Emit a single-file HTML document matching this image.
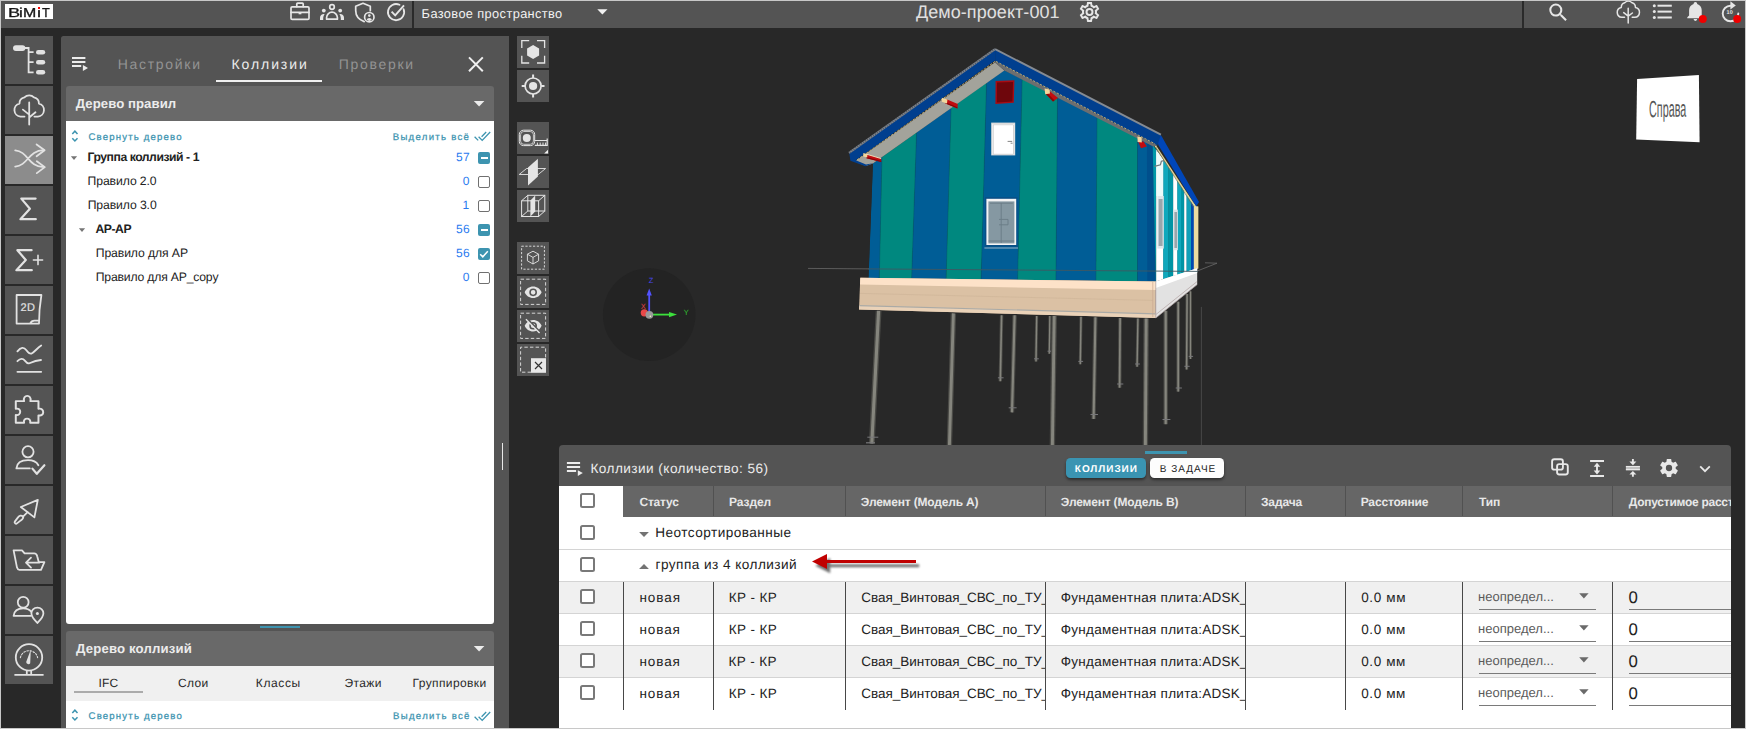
<!DOCTYPE html>
<html lang="ru">
<head>
<meta charset="utf-8">
<title>BIMIT</title>
<style>
*{box-sizing:border-box;margin:0;padding:0}
html,body{width:1746px;height:729px;overflow:hidden;background:#282828}
body{font-family:"Liberation Sans",sans-serif;text-rendering:geometricPrecision;color:#222;position:relative}
#app{position:absolute;left:0;top:0;width:1746px;height:729px;overflow:hidden;background:#282828}
.abs{position:absolute}
.t{position:absolute;white-space:nowrap;line-height:1}
svg{position:absolute;overflow:visible}
/* frame */
#frame{position:absolute;left:0;top:0;width:1746px;height:729px;border:1px solid #c8c8c8;z-index:50;pointer-events:none}
/* top bar */
#topbar{position:absolute;left:1px;top:1px;width:1744px;height:27px;background:#545454}
.vsep{position:absolute;top:1px;height:27px;width:2px;background:#2a2a2a}
/* sidebar */
.sb{position:absolute;left:5px;width:48px;height:48px;background:#545454}
.sb.on{background:#8c8c8c}
/* left panel */
#lp{position:absolute;left:61px;top:36px;width:448px;height:693px;background:#545454;border-radius:2.500px 0 0 0}
.cardh{position:absolute;left:66px;width:428px;height:35px;background:#696969;border-radius:3px 3px 0 0}
/* viewer toolbar */
.vb{position:absolute;left:517px;width:32px;height:32px;background:#545454}
/* bottom panel */
#bp{position:absolute;left:559px;top:445px;width:1172px;height:284px;background:#545454;border-radius:4px 4px 0 0;overflow:hidden}

.tw{font-size:12px;color:#222;line-height:12px}
.tw.b{font-weight:700}
.tn{font-size:12px;color:#2a7aef;line-height:12px}
.cb{position:absolute;left:478px;width:12px;height:12px;border:1.500px solid #707070;border-radius:2px;background:#fff}
.cb.f{background:#3d94b0;border:none}
.cb .mi{position:absolute;left:2.500px;top:5px;width:7px;height:2px;background:#fff}
.tab2{top:676.500px;font-size:12px;color:#2a2a2a}

.pill{border-radius:4.500px;box-shadow:0 2px 3px rgba(0,0,0,.45)}
.th{top:495.500px;font-size:12px;font-weight:700;color:#e8e8e8}
.td{font-size:14px;color:#222;line-height:16px}
.cb2{position:absolute;left:580px;width:14.500px;height:14.500px;border:2px solid #797979;border-radius:2.500px;background:#fff}
.clip{height:32px;overflow:hidden}
#tr_a,#tr_b,#tr_c,#tr_d{-webkit-text-stroke:0.250px #3d94b0}
.lg{top:5.500px;font-size:13px;color:#161616;transform-origin:0 0;-webkit-text-stroke:0.300px #161616}
</style>
</head>
<body>
<div id="app">
<div id="topbar"></div>
<div class="abs" style="left:5px;top:4px;width:48px;height:15px;background:#fff"></div>
<span id="logo"><span class="t lg" style="left:7.56px;transform:scaleX(1.396)">B</span><span class="t lg" style="left:19.49px;transform:scaleX(1.308)">i</span><span class="t lg" style="left:23.48px;transform:scaleX(1.224)">M</span><span class="t lg" style="left:36.92px;transform:scaleX(1.385)">i</span><span class="t lg" style="left:42.09px;transform:scaleX(0.982)">T</span></span>
<div class="abs" style="left:37.800px;top:7px;width:2.300px;height:2.200px;background:#ff0000;z-index:2"></div>
<div class="vsep" style="left:412px"></div>
<div class="vsep" style="left:1522px"></div>
<svg style="left:0;top:0" width="1746" height="29" viewBox="0 0 1746 29" fill="none" stroke="#e6e6e6" stroke-width="1.7" stroke-linejoin="round" stroke-linecap="round">
 <!-- briefcase -->
 <rect x="291" y="6.8" width="18" height="12.6" rx="1.2"/>
 <path d="M296.8 6.6V3.9a.8.8 0 0 1 .8-.8h4.8a.8.8 0 0 1 .8.8V6.6M291 12.4h18"/>
 <rect x="298.6" y="12" width="2.8" height="2.3" fill="#e6e6e6" stroke="none"/>
 <!-- people -->
 <circle cx="332" cy="7" r="2.3"/>
 <path d="M326.6 19.2v-1.6a5.4 5.4 0 0 1 10.8 0v1.6z"/>
 <g fill="#e6e6e6" stroke="none"><circle cx="323.8" cy="10.6" r="1.9"/><circle cx="340.2" cy="10.6" r="1.9"/>
 <path d="M320 19.9v-2.2a3.8 3.8 0 0 1 4.6-3.7a7 7 0 0 0-1.4 4v1.9z"/><path d="M344 19.9v-2.2a3.8 3.8 0 0 0-4.6-3.7a7 7 0 0 1 1.4 4v1.9z"/></g>
 <!-- shield user -->
 <path d="M364.200 21.600c-5.400-1.800-8.500-5.800-8.500-11V6.300L363 3.300l7.300 3v4.400"/>
 <circle cx="369.3" cy="17.2" r="4.7" fill="#545454"/>
 <g fill="#e6e6e6" stroke="none"><circle cx="369.3" cy="15.6" r="1.3"/><path d="M366.7 19.6a2.7 2.2 0 0 1 5.2 0a3.6 3.6 0 0 1-5.2 0z"/></g>
 <!-- check circle -->
 <path d="M403.6 9.2A8.1 8.1 0 1 1 399.5 4.8" stroke-width="1.8"/>
 <path d="M391.6 11.6l3.6 3.7l8.8-10" stroke-width="1.9" stroke-linejoin="miter" stroke-linecap="butt"/>
 <!-- dropdown triangle -->
 <path d="M597.3 9.3h10.2l-5.1 5.2z" fill="#f2f2f2" stroke="none"/>
 <!-- gear outline -->
 <g transform="translate(1077.500,0) scale(1)" fill="#e6e6e6" stroke="none"><path d="M12,8A4,4 0 0,1 16,12A4,4 0 0,1 12,16A4,4 0 0,1 8,12A4,4 0 0,1 12,8M12,10A2,2 0 0,0 10,12A2,2 0 0,0 12,14A2,2 0 0,0 14,12A2,2 0 0,0 12,10M10,22C9.75,22 9.54,21.82 9.5,21.58L9.13,18.93C8.5,18.68 7.96,18.34 7.44,17.94L4.95,18.95C4.73,19.03 4.46,18.95 4.34,18.73L2.34,15.27C2.21,15.05 2.27,14.78 2.46,14.63L4.57,12.97L4.5,12L4.57,11L2.46,9.37C2.27,9.22 2.21,8.95 2.34,8.73L4.34,5.27C4.46,5.05 4.73,4.96 4.95,5.05L7.44,6.05C7.96,5.66 8.5,5.32 9.13,5.07L9.5,2.42C9.54,2.18 9.75,2 10,2H14C14.25,2 14.46,2.18 14.5,2.42L14.87,5.07C15.5,5.32 16.04,5.66 16.56,6.05L19.05,5.05C19.27,4.96 19.54,5.05 19.66,5.27L21.66,8.73C21.79,8.95 21.73,9.22 21.54,9.37L19.43,11L19.5,12L19.43,13L21.54,14.63C21.73,14.78 21.79,15.05 21.66,15.27L19.66,18.73C19.54,18.95 19.27,19.04 19.05,18.95L16.56,17.95C16.04,18.34 15.5,18.68 14.87,18.93L14.5,21.58C14.46,21.82 14.25,22 14,22H10M11.25,4L10.88,6.61C9.68,6.86 8.62,7.5 7.85,8.39L5.44,7.35L4.69,8.65L6.8,10.2C6.4,11.37 6.4,12.64 6.8,13.8L4.68,15.36L5.43,16.66L7.86,15.62C8.63,16.5 9.68,17.14 10.87,17.38L11.24,20H12.76L13.13,17.39C14.32,17.14 15.37,16.5 16.14,15.62L18.57,16.66L19.32,15.36L17.2,13.81C17.6,12.64 17.6,11.37 17.2,10.2L19.31,8.65L18.56,7.35L16.15,8.39C15.38,7.5 14.32,6.86 13.12,6.62L12.75,4H11.25Z"/></g>
 <!-- search -->
 <g transform="translate(1546.3,0.6) scale(1.0)" fill="#e6e6e6" stroke="none"><path d="M9.5,3A6.5,6.5 0 0,1 16,9.5C16,11.11 15.41,12.59 14.44,13.73L14.71,14H15.5L20.5,19L19,20.5L14,15.5V14.71L13.73,14.44C12.59,15.41 11.11,16 9.5,16A6.5,6.5 0 0,1 3,9.5A6.5,6.5 0 0,1 9.5,3M9.5,5C7,5 5,7 5,9.5C5,12 7,14 9.5,14C12,14 14,12 14,9.5C14,7 12,5 9.5,5Z"/></g>
 <!-- cloud tree -->
 <g stroke-width="1.5"><path d="M1624.5 17.3h-2.6a5 5 0 0 1 -0.6 -9.9a4.6 4.6 0 0 1 3.4 -4.6a5.3 5.3 0 0 1 7.3 0a4.6 4.6 0 0 1 3.4 4.6a5 5 0 0 1 -0.6 9.9h-2.6"/><path d="M1628.2 23V8.2M1628.2 16.2l-4.5-3.6M1628.2 16.2l4.2-3.2"/></g>
 <!-- list -->
 <g fill="#e6e6e6" stroke="none"><rect x="1657.5" y="4.7" width="14.3" height="2"/><rect x="1657.5" y="10.6" width="14.3" height="2"/><rect x="1657.5" y="16.5" width="14.3" height="2"/><circle cx="1654.3" cy="5.7" r="1.5"/><circle cx="1654.3" cy="11.6" r="1.5"/><circle cx="1654.3" cy="17.5" r="1.5"/></g>
 <!-- bell -->
 <g transform="translate(1684.6,0.2) scale(0.9)" fill="#e6e6e6" stroke="none"><path d="M21,19V20H3V19L5,17V11C5,7.9 7.03,5.17 10,4.29C10,4.19 10,4.1 10,4A2,2 0 0,1 12,2A2,2 0 0,1 14,4C14,4.1 14,4.19 14,4.29C16.97,5.17 19,7.9 19,11V17L21,19M14,21A2,2 0 0,1 12,23A2,2 0 0,1 10,21"/></g>
 <circle cx="1702.8" cy="19" r="4" fill="#ee0000" stroke="none"/>
 <!-- replay 10 -->
 <path d="M1730.500 5.700A7.800 7.800 0 1 0 1738.300 13.500" stroke-width="1.900"/>
 <path d="M1730.400 1.200l5.400 4.400l-5.400 4z" fill="#e6e6e6" stroke="none"/>
 <circle cx="1737.2" cy="19" r="4" fill="#ee0000" stroke="none"/>
</svg>
<span class="t" style="left:1726.600px;top:11px;font-size:5.500px;color:#e6e6e6;font-weight:700">10</span>
<span class="t" id="tb_space" style="left:421.61px;top:8.00px;font-size:12.80px;color:#f2f2f2;line-height:1;letter-spacing:0.38px">Базовое пространство</span>
<span class="t" id="tb_proj" style="left:915.99px;top:3.00px;font-size:18.00px;color:#e0e0e0;line-height:1;letter-spacing:0.06px">Демо-проект-001</span>

<div class="sb" style="top:36px"></div><div class="sb" style="top:86px"></div><div class="sb on" style="top:136px"></div>
<div class="sb" style="top:186px"></div><div class="sb" style="top:236px"></div><div class="sb" style="top:286px"></div>
<div class="sb" style="top:336px"></div><div class="sb" style="top:386px"></div><div class="sb" style="top:436px"></div>
<div class="sb" style="top:486px"></div><div class="sb" style="top:536px"></div><div class="sb" style="top:586px"></div>
<div class="sb" style="top:636px"></div>
<svg style="left:0;top:0" width="60" height="729" viewBox="0 0 60 729" fill="none" stroke="#e2e2e2" stroke-width="1.8" stroke-linecap="round" stroke-linejoin="round">
 <!-- 1 tree -->
 <rect x="13" y="45.2" width="12.4" height="5.8" rx="2.9" fill="#e2e2e2" stroke="none"/>
 <path d="M24 48h4.6V72.3h5M28.6 52.2h5M28.6 62.2h5" stroke-linecap="butt" stroke-linejoin="miter"/>
 <g fill="#e2e2e2" stroke="none"><rect x="36" y="49.9" width="9.2" height="4.6" rx="2.3"/><rect x="36" y="59.9" width="9.2" height="4.6" rx="2.3"/><rect x="36" y="69.9" width="9.2" height="4.6" rx="2.3"/></g>
 <!-- 2 cloud tree -->
 <path d="M24.5 116.6h-4a6.6 6.6 0 0 1 -1 -13a6.2 6.2 0 0 1 4.9 -6.2a6.8 6.8 0 0 1 9.6 0a6.2 6.2 0 0 1 4.9 6.2a6.6 6.6 0 0 1 -1 13h-3.5"/>
 <path d="M29.2 124.5V102.5M29.2 114.6l-6.3-5M29.2 117.5l6.3-5.2"/>
 <!-- 3 shuffle -->
 <path d="M15.2 166.6c13 -1 13 -16.4 28.4 -16.4M15.2 150.4c13 1 13 16.6 28.4 16.6"/>
 <path d="M36.6 144.4l8 5.8l-8 6M36.8 161.2l8 5.9l-8 6"/>
 <!-- 4 sigma -->
 <path d="M35.6 198.6H21.3l8.6 10.2l-9.5 10.4h15.4" stroke-width="2.2"/>
 <!-- 5 sigma plus -->
 <path d="M31.6 250.2H17.4l8.4 9.8l-9.4 10.2h15.4" stroke-width="2.2"/>
 <path d="M38 255.4v9.2M33.4 260h9.2" stroke-width="1.6"/>
 <!-- 6 2D -->
 <path d="M16.6 295h24.8c-1.5 9 -2.4 18 -2.4 28.6H16.6zM39 320.6h-4.6c-2 0 -3.6 1.4 -4.4 3"/>
 <!-- 7 chart -->
 <path d="M17.4 351.4c3.5 -4.4 6.5 -4.6 9 -1.2c1.6 2.2 3.2 4 5 3.4c2.6 -1 5.6 -5.4 9.8 -8.2M17.4 361.2c3 -3 5.4 -3.2 7.4 -0.6c1.4 1.8 2.8 3.2 4.6 2.6c3.4 -1.6 7 -3 11.6 -3.2M17.4 371.8h23.8"/>
 <!-- 8 puzzle -->
 <g transform="translate(30.400,409.200) scale(1.090,1.060) translate(-30.400,-409.200)"><path d="M24.6 401.6h-7.6v7.2c5.4 -1.4 5.4 7.2 0 5.8v7.4h7.6c-1.4 -5.2 6.8 -5.2 5.6 0h7.6v-7c5.8 1.6 5.8 -7.6 0 -6.2v-7.2h-7.4c1.8 -6.6 -7.6 -6.6 -5.8 0z"/></g>
 <!-- 9 user check -->
 <circle cx="28" cy="451.8" r="5.6"/>
 <path d="M16.4 468.4c0.5 -5.6 5 -8.2 11.6 -8.2c5 0 8.6 1.8 10.4 5M16.4 468.4h13.4"/>
 <path d="M32.4 468.6l4.4 5.2l7.6 -8.6" stroke-width="2.2"/>
 <!-- 10 trowel -->
 <path d="M37.8 499.8l-17 7.2l13.6 10.4z"/>
 <path d="M27.6 512.2l-4.8 4.6"/>
 <path d="M23 516.6c-1.6 -1.8 -3.6 -1.2 -5.2 1l-3 4c-0.8 1.2 1 2.8 2.2 1.8l3.8 -3c2 -1.4 3 -2.8 2.2 -3.8z"/>
 <!-- 11 folder arrow -->
 <path d="M13.6 550.4h8.4l2.6 3h9.6c2 0 2.6 1 3 2.8l1.6 6h5.6l-3.4 7.6H19.4c-1.4 0 -2 -0.8 -2.4 -2.2z"/>
 <path d="M39.4 562.6h-13M31 557.6l-5 5l5 5"/>
 <!-- 12 user location -->
 <circle cx="23.2" cy="602.2" r="5.4"/>
 <path d="M13.6 615.8c0.6 -5 4.4 -7.4 9.6 -7.4c3.6 0 6.4 1.2 8 3.4M13.6 615.8h17.4"/>
 <path d="M37.4 607.6c-3.6 0 -6 2.6 -6 5.6c0 3.8 3.4 7 6 9.8c2.6 -2.8 6 -6 6 -9.8c0 -3 -2.4 -5.600 -6 -5.600z" fill="#545454"/>
 <circle cx="37.400" cy="613.4" r="1.500" fill="#e2e2e2" stroke="none"/>
 <!-- 13 gauge -->
 <circle cx="29" cy="657.400" r="13.200"/>
 <path d="M14.400 674.800h29.200M26.800 670.800v3.600M31.200 670.800v3.600" stroke-linecap="butt"/>
 <path d="M20.400 657.600a8.800 8.800 0 0 1 17.200 0" stroke-width="1.100" stroke-dasharray="1.6 1.600"/>
 <path d="M30.800 649.400l-4.600 12.600a2.200 2.200 0 0 0 4 1.200z" fill="#e2e2e2" stroke="none"/>
</svg>
<span class="t" style="left:20.400px;top:303px;font-size:11px;color:#e2e2e2;letter-spacing:0.600px;-webkit-text-stroke:0.200px #e2e2e2">2D</span>

<div id="lp"></div>
<!-- panel header -->
<svg style="left:68px;top:51px" width="24" height="24" viewBox="68 51 24 24" fill="#ececec"><rect x="72" y="57" width="13.400" height="2"/><rect x="72" y="61" width="13.400" height="2"/><rect x="72" y="65" width="9.200" height="2"/><path d="M82.900 65.100v6l5.100 -3z"/></svg>
<span class="t" id="tab1" style="left:117.71px;top:57.00px;font-size:14.00px;color:#939393;letter-spacing:1.70px;line-height:1">Настройки</span>
<span class="t" id="tab2" style="left:231.52px;top:57.00px;font-size:14.00px;color:#ececec;letter-spacing:1.91px;line-height:1">Коллизии</span>
<span class="t" id="tab3" style="left:338.70px;top:57.00px;font-size:14.00px;color:#939393;letter-spacing:1.71px;line-height:1">Проверки</span>
<div class="abs" style="left:216px;top:80px;width:106px;height:2px;background:#f0f0f0"></div>
<svg style="left:466px;top:54px" width="20" height="20" viewBox="0 0 20 20"><path d="M3 3.400L16.800 17.200M16.800 3.400L3 17.200" stroke="#f0f0f0" stroke-width="2" fill="none"/></svg>
<!-- card 1 -->
<div class="cardh" style="top:86px"></div>
<span class="t" id="c1t" style="left:75.72px;top:97.00px;font-size:13.20px;font-weight:700;color:#ececec;line-height:1;letter-spacing:0.05px">Дерево правил</span>
<svg style="left:473px;top:100px" width="12" height="8" viewBox="0 0 12 8"><path d="M0.800 1h10.600l-5.300 5.400z" fill="#ececec"/></svg>
<div class="abs" style="left:66px;top:121px;width:428px;height:503px;background:#fff;border-radius:0 0 3px 3px"></div>
<!-- tree toolbar -->
<svg style="left:69px;top:129.200px" width="12" height="14" viewBox="0 0 12 14" fill="none" stroke="#3d94b0" stroke-width="1.500"><path d="M3.300 5L5.900 2.200l2.600 2.800M3.300 9.200L5.900 12l2.600 -2.800"/></svg>
<span class="t" id="tr_a" style="left:88.50px;top:133.00px;font-size:9.60px;color:#3d94b0;letter-spacing:1.17px;line-height:1">Свернуть дерево</span>
<span class="t" id="tr_b" style="left:392.78px;top:133.00px;font-size:9.60px;color:#3d94b0;letter-spacing:1.28px;line-height:1">Выделить всё</span>
<svg style="left:474px;top:131px" width="17" height="11" viewBox="0 0 17 11" fill="none" stroke="#3d94b0" stroke-width="1.300"><path d="M0.600 5.800l3.600 3.600M4.600 5.800l3.600 3.600l8 -8.400M12.200 1l-4.600 4.800"/></svg>
<!-- tree rows -->
<svg style="left:66px;top:145px" width="30" height="100" viewBox="66 145 30 100"><path d="M70.900 156.300h6.200l-3.100 3.600z" fill="#757575"/><path d="M78.900 228.300h6.200l-3.100 3.600z" fill="#757575"/></svg>
<span class="t tw b" id="r1" style="left:87.41px;top:151.00px;font-size:12.20px;line-height:1;letter-spacing:-0.45px">Группа коллизий - 1</span>
<span class="t tw" id="r2" style="left:87.58px;top:175.00px;font-size:12.20px;line-height:1;letter-spacing:-0.09px">Правило 2.0</span>
<span class="t tw" id="r3" style="left:87.63px;top:199.00px;font-size:12.20px;line-height:1;letter-spacing:-0.09px">Правило 3.0</span>
<span class="t tw b" id="r4" style="left:95.49px;top:223.00px;font-size:12.20px;line-height:1;letter-spacing:-0.46px">AP-AP</span>
<span class="t tw" id="r5" style="left:95.72px;top:247.00px;font-size:12.20px;line-height:1;letter-spacing:-0.09px">Правило для AP</span>
<span class="t tw" id="r6" style="left:95.73px;top:271.00px;font-size:12.20px;line-height:1;letter-spacing:-0.18px">Правило для AP_copy</span>
<span class="t tn" id="n1" style="left:456.08px;top:151.00px;font-size:12.00px;line-height:1;letter-spacing:0.13px">57</span><span class="t tn" id="n2" style="left:462.80px;top:175.00px;font-size:12.00px;line-height:1">0</span><span class="t tn" id="n3" style="left:462.38px;top:199.00px;font-size:12.00px;line-height:1">1</span>
<span class="t tn" id="n4" style="left:456.08px;top:223.00px;font-size:12.00px;line-height:1;letter-spacing:0.20px">56</span><span class="t tn" id="n5" style="left:456.08px;top:247.00px;font-size:12.00px;line-height:1;letter-spacing:0.20px">56</span><span class="t tn" id="n6" style="left:462.80px;top:271.00px;font-size:12.00px;line-height:1">0</span>
<div class="cb f" style="top:152px"><i class="mi"></i></div>
<div class="cb" style="top:176px"></div>
<div class="cb" style="top:200px"></div>
<div class="cb f" style="top:224px"><i class="mi"></i></div>
<div class="cb f" style="top:248px"><svg style="left:0;top:0" width="12" height="12" viewBox="0 0 12 12"><path d="M2.200 6.200l2.600 2.600l5 -5.600" stroke="#fff" stroke-width="1.500" fill="none"/></svg></div>
<div class="cb" style="top:272px"></div>
<!-- splitter handle -->
<div class="abs" style="left:260px;top:626px;width:40px;height:2px;background:#3d94b0"></div>
<!-- card 2 -->
<div class="cardh" style="top:631px"></div>
<span class="t" id="c2t" style="left:76.00px;top:642.00px;font-size:13.20px;font-weight:700;color:#ececec;line-height:1;letter-spacing:0.15px">Дерево коллизий</span>
<svg style="left:473px;top:645px" width="12" height="8" viewBox="0 0 12 8"><path d="M0.800 1h10.600l-5.300 5.400z" fill="#ececec"/></svg>
<div class="abs" style="left:66px;top:666px;width:428px;height:35px;background:#f0f0f0"></div>
<div class="abs" style="left:66px;top:701px;width:428px;height:28px;background:#fff"></div>
<span class="t tab2" id="k1" style="left:98.46px;top:677.00px;font-size:12.00px;line-height:1;letter-spacing:0.18px">IFC</span><span class="t tab2" id="k2" style="left:178.09px;top:677.00px;font-size:12.00px;line-height:1;letter-spacing:0.31px">Слои</span><span class="t tab2" id="k3" style="left:255.80px;top:677.00px;font-size:12.00px;line-height:1;letter-spacing:0.62px">Классы</span><span class="t tab2" id="k4" style="left:344.46px;top:677.00px;font-size:12.00px;line-height:1;letter-spacing:0.39px">Этажи</span><span class="t tab2" id="k5" style="left:412.62px;top:677.00px;font-size:12.00px;line-height:1;letter-spacing:0.38px">Группировки</span>
<div class="abs" style="left:74px;top:691px;width:69px;height:2px;background:#ababab"></div>
<svg style="left:69px;top:708.200px" width="12" height="14" viewBox="0 0 12 14" fill="none" stroke="#3d94b0" stroke-width="1.500"><path d="M3.300 5L5.900 2.200l2.600 2.800M3.300 9.200L5.900 12l2.600 -2.800"/></svg>
<span class="t" id="tr_c" style="left:88.57px;top:712.00px;font-size:9.60px;color:#3d94b0;letter-spacing:1.18px;line-height:1">Свернуть дерево</span>
<span class="t" id="tr_d" style="left:393.05px;top:712.00px;font-size:9.60px;color:#3d94b0;letter-spacing:1.30px;line-height:1">Выделить всё</span>
<svg style="left:474px;top:711px" width="17" height="11" viewBox="0 0 17 11" fill="none" stroke="#3d94b0" stroke-width="1.300"><path d="M0.600 5.800l3.600 3.600M4.600 5.800l3.600 3.600l8 -8.400M12.200 1l-4.600 4.800"/></svg>
<!-- resizer line -->
<div class="abs" style="left:502px;top:443px;width:1px;height:27px;background:#e8e8e8"></div>

<svg style="left:0;top:0" width="1746" height="729" viewBox="0 0 1746 729">
<circle cx="649.2" cy="314.6" r="46.3" fill="#232323"/>
<path d="M649.2 314.600V292" stroke="#5252ff" stroke-width="1.800"/><path d="M649.2 288.400l2.600 7h-5.200z" fill="#5252ff"/>
<path d="M649.200 314.600H670" stroke="#3ce03c" stroke-width="1.800"/><path d="M677 314.600l-8 2.600v-5.200z" fill="#3ce03c"/>
<circle cx="644.300" cy="312.800" r="3.600" fill="#e84848"/><circle cx="649.400" cy="314.800" r="3.900" fill="#9a9a9a"/><circle cx="650.300" cy="316.300" r="0.700" fill="#ffffc0"/>
<text x="648.800" y="283.400" font-family="Liberation Sans, sans-serif" font-size="7.500" fill="#4848f0">Z</text>
<text x="683.800" y="314.600" font-family="Liberation Sans, sans-serif" font-size="7.500" fill="#30c030">Y</text>
<text x="640.800" y="308.600" font-family="Liberation Sans, sans-serif" font-size="7.500" fill="#e04040">X</text>
<polygon points="1637.100,78.900 1698.900,75.100 1699.600,142.300 1636.200,139.600" fill="#ffffff"/>
<text x="0" y="0" transform="translate(1649.100,117.200) skewY(-1) scale(0.458,1)" font-family="Liberation Sans, sans-serif" font-size="23.500" fill="#555555">Справа</text>
<path d="M808 268.400L1196 271.500L1217 263.200L1205 262.800" stroke="#6a6a6a" stroke-width="0.800" fill="none"/>
<path d="M878.6 310.8L871.8 443.7" stroke="#4a4a46" stroke-width="5.8"/>
<path d="M878.6 310.8L871.8 443.7" stroke="#85857d" stroke-width="3.1"/>
<path d="M867.3 437.2h11" stroke="#77777a" stroke-width="1"/>
<path d="M953.4 313.4L949.4 445" stroke="#4a4a46" stroke-width="5.4"/>
<path d="M953.4 313.4L949.4 445" stroke="#85857d" stroke-width="2.9"/>
<path d="M1001.6 315.2L1000.3 381.2" stroke="#4a4a46" stroke-width="3.4"/>
<path d="M1001.6 315.2L1000.3 381.2" stroke="#85857d" stroke-width="1.6"/>
<path d="M997.9 377.8h5.7" stroke="#77777a" stroke-width="1"/>
<path d="M1014.6 315.2L1012 412.4" stroke="#4a4a46" stroke-width="4.4"/>
<path d="M1014.6 315.2L1012 412.4" stroke="#85857d" stroke-width="2.2"/>
<path d="M1008.7 407.8h7.9" stroke="#77777a" stroke-width="1"/>
<path d="M1036.7 316L1036 361.6" stroke="#4a4a46" stroke-width="3"/>
<path d="M1036.7 316L1036 361.6" stroke="#85857d" stroke-width="1.4"/>
<path d="M1034 358.8h4.8" stroke="#77777a" stroke-width="1"/>
<path d="M1049.8 316L1049.3 353.8" stroke="#4a4a46" stroke-width="2.8"/>
<path d="M1049.8 316L1049.3 353.8" stroke="#85857d" stroke-width="1.2"/>
<path d="M1047.5 351.2h4.4" stroke="#77777a" stroke-width="1"/>
<path d="M1054.2 316L1052.4 445" stroke="#4a4a46" stroke-width="5.4"/>
<path d="M1054.2 316L1052.4 445" stroke="#85857d" stroke-width="2.9"/>
<path d="M1081 316.8L1080.3 364.2" stroke="#4a4a46" stroke-width="3"/>
<path d="M1081 316.8L1080.3 364.2" stroke="#85857d" stroke-width="1.4"/>
<path d="M1078.3 361.4h4.8" stroke="#77777a" stroke-width="1"/>
<path d="M1095.4 317.3L1093.6 419" stroke="#4a4a46" stroke-width="4.2"/>
<path d="M1095.4 317.3L1093.6 419" stroke="#85857d" stroke-width="2.1"/>
<path d="M1090.5 414.5h7.5" stroke="#77777a" stroke-width="1"/>
<path d="M1120.1 317.9L1119.6 387.7" stroke="#4a4a46" stroke-width="3.6"/>
<path d="M1120.1 317.9L1119.6 387.7" stroke="#85857d" stroke-width="1.7"/>
<path d="M1117.1 384h6.2" stroke="#77777a" stroke-width="1"/>
<path d="M1137.9 318.6L1137.1 366.8" stroke="#4a4a46" stroke-width="3"/>
<path d="M1137.9 318.6L1137.1 366.8" stroke="#85857d" stroke-width="1.4"/>
<path d="M1135.1 364h4.8" stroke="#77777a" stroke-width="1"/>
<path d="M1146.2 318.6L1145.4 445" stroke="#4a4a46" stroke-width="5.4"/>
<path d="M1146.2 318.6L1145.4 445" stroke="#85857d" stroke-width="2.9"/>
<path d="M1165.7 310.8L1165.7 424.2" stroke="#4a4a46" stroke-width="4.4"/>
<path d="M1165.7 310.8L1165.7 424.2" stroke="#85857d" stroke-width="2.2"/>
<path d="M1162.5 419.5h7.9" stroke="#77777a" stroke-width="1"/>
<path d="M1178.2 301.7L1178.2 391.6" stroke="#4a4a46" stroke-width="3.6"/>
<path d="M1178.2 301.7L1178.2 391.6" stroke="#85857d" stroke-width="1.7"/>
<path d="M1175.7 388h6.2" stroke="#77777a" stroke-width="1"/>
<path d="M1187.1 293.9L1186.6 369.4" stroke="#4a4a46" stroke-width="3.2"/>
<path d="M1187.1 293.9L1186.6 369.4" stroke="#85857d" stroke-width="1.5"/>
<path d="M1184.4 366.3h5.3" stroke="#77777a" stroke-width="1"/>
<path d="M1190.5 291.3L1190.5 359" stroke="#4a4a46" stroke-width="2.8"/>
<path d="M1190.5 291.3L1190.5 359" stroke="#85857d" stroke-width="1.2"/>
<path d="M1188.7 356.4h4.4" stroke="#77777a" stroke-width="1"/>
<path d="M866 442.800h9" stroke="#77777a" stroke-width="1.200"/>
<path d="M1201.4 306.9V446" stroke="#555" stroke-width="0.700"/>
<defs><clipPath id="cw"><polygon points="872.9,163.4 1004.2,70.2 1153,144.6 1155.8,281.4 868.4,278"/></clipPath></defs>
<g clip-path="url(#cw)">
<polygon points="877.7,40 884.8,40 879.5,282 868.4,282" fill="#005d96"/>
<polygon points="884.5,40 920,40 911.8,282 879.2,282" fill="#00887f"/>
<polygon points="919.7,40 953.3,40 946.3,282 911.5,282" fill="#005d96"/>
<polygon points="953,40 988,40 981.3,282 946,282" fill="#00887f"/>
<polygon points="987.7,40 1023.3,40 1017.8,282 981,282" fill="#005d96"/>
<polygon points="1023,40 1058.3,40 1056.2,282 1017.5,282" fill="#00887f"/>
<polygon points="1058,40 1097.8,40 1096.2,282 1055.9,282" fill="#005d96"/>
<polygon points="1097.5,40 1137.7,40 1137.7,282 1095.9,282" fill="#00887f"/>
<polygon points="1137.4,40 1150.8,40 1156.1,282 1137.4,282" fill="#005d96"/>
<polygon points="1146.5,40 1153,40 1155.8,282 1147.3,282" fill="#004f8c"/>
<path d="M884.5 40L879.2 282" stroke="#00505c" stroke-width="0.500" opacity="0.700"/>
<path d="M919.7 40L911.5 282" stroke="#00505c" stroke-width="0.500" opacity="0.700"/>
<path d="M953 40L946 282" stroke="#00505c" stroke-width="0.500" opacity="0.700"/>
<path d="M987.7 40L981 282" stroke="#00505c" stroke-width="0.500" opacity="0.700"/>
<path d="M1023 40L1017.5 282" stroke="#00505c" stroke-width="0.500" opacity="0.700"/>
<path d="M1058 40L1055.9 282" stroke="#00505c" stroke-width="0.500" opacity="0.700"/>
<path d="M1097.5 40L1095.9 282" stroke="#00505c" stroke-width="0.500" opacity="0.700"/>
<path d="M1137.4 40L1137.4 282" stroke="#00505c" stroke-width="0.500" opacity="0.700"/>
</g>
<polygon points="995.600,81 1014.400,80.200 1013.800,102.800 995.400,104" fill="#a80c14"/>
<polygon points="997,82.600 1013,82 1012.400,101.400 996.800,102.400" fill="#6e060c"/>
<rect x="991.200" y="122.600" width="24" height="32.800" fill="#dcdcdc"/><rect x="992.400" y="124" width="21.800" height="30.600" fill="#ffffff"/>
<rect x="993.200" y="124.800" width="20.200" height="29.400" fill="none" stroke="#c4c4c4" stroke-width="0.700"/>
<path d="M1007.600 141.400h4.600M1010.600 143.200h2" stroke="#777" stroke-width="0.900"/>
<rect x="985" y="197.200" width="32.400" height="49.400" fill="#0a4f86"/>
<rect x="986.400" y="198.800" width="29.800" height="46.200" fill="#f4f4f4"/>
<rect x="988.400" y="201.400" width="26" height="42" fill="#8598a2"/>
<path d="M990 203.200h22.800M1001.200 203v40M999 219.400h9v5.400h-9M988.600 241h25.600" stroke="#6a7c86" stroke-width="0.900" fill="none"/>
<path d="M984.400 248h33.600" stroke="#9fb4c4" stroke-width="1.200"/>
<defs><clipPath id="cs"><polygon points="1152.6,144.4 1195.8,206 1198.4,206.4 1198.4,268.6 1155.8,281.6"/></clipPath></defs>
<g clip-path="url(#cs)">
<rect x="1152.4" y="140" width="4.1" height="145" fill="#0098a8"/>
<rect x="1156.2" y="140" width="7.3" height="145" fill="#ffffff"/>
<rect x="1163.2" y="140" width="5.5" height="145" fill="#10a8bc"/>
<rect x="1168.4" y="140" width="5.1" height="145" fill="#0094a4"/>
<rect x="1173.2" y="140" width="4.4" height="145" fill="#ffffff"/>
<rect x="1177.3" y="140" width="4" height="145" fill="#10a8bc"/>
<rect x="1181" y="140" width="3.5" height="145" fill="#0094a4"/>
<rect x="1184.2" y="140" width="2.6" height="145" fill="#ffffff"/>
<rect x="1186.5" y="140" width="4.8" height="145" fill="#10a0b8"/>
<rect x="1191" y="140" width="3.1" height="145" fill="#0048b0"/>
<rect x="1193.8" y="140" width="5.1" height="145" fill="#ecdca0"/>
<rect x="1157.400" y="196" width="6.400" height="52.600" fill="#dfe6ea"/><rect x="1158.600" y="199" width="4" height="47" fill="#9aa6ac"/>
<rect x="1173.400" y="209.600" width="4.400" height="40.600" fill="#dfe6ea"/><rect x="1174.400" y="212" width="2.600" height="36" fill="#9aa6ac"/>
<rect x="1156.200" y="152" width="7" height="44" fill="#e8fafa" opacity="0.800"/>
</g>
<path d="M1154.400 166.400l6 -1.600l1 -3.600l3.600 -0.800" stroke="#70787c" stroke-width="1.300" fill="none"/>
<polygon points="1160.9,135 1199,202 1196.2,206.4 1158.6,145.6 1157,140" fill="#0046b8"/>
<path d="M1154.400 144.400L1195.200 206.600" stroke="#e4d494" stroke-width="1.700"/>
<path d="M1155.600 147L1193.600 207" stroke="#6a705c" stroke-width="0.700"/>
<polygon points="995.1,62.2 1004.4,70.4 872.9,163.4 866,166 854.8,161.4" fill="#a3a39b"/>
<polygon points="995.1,49.4 849.3,153.2 850.4,160.8 865.5,166.2 873,163.2 866,164.4 855.8,160.2 995.1,60.6" fill="#003f8f"/>
<path d="M995.100 49.100L849 152.900" stroke="#7d838b" stroke-width="2.100"/>
<path d="M995.100 49.100L849 152.900" stroke="#4a5058" stroke-width="2.100" stroke-dasharray="0.700 1.700"/>
<path d="M995.100 61.400L856 160.600" stroke="#c8b478" stroke-width="0.900" stroke-dasharray="2.400 1.400"/>
<polygon points="995.1,49.4 1160.9,135 1157.4,145.6 995.1,61.2" fill="#003f8f"/>
<polygon points="995.1,61.2 1157.4,145.6 1153.2,146.6 1004.4,70.6 995.1,62.8" fill="#6c6e70"/>
<path d="M995.100 49.100L1160.900 134.600" stroke="#858b93" stroke-width="1.800"/>
<path d="M996 61.400L1155 143.800" stroke="#c8b478" stroke-width="0.900" stroke-dasharray="2.400 1.400"/>
<polygon points="866.5,154.2 881.2,158.6 881.2,162 866.5,158.2" fill="#c20c10"/>
<polygon points="866.5,157 881.2,160.8 881.2,162 866.5,158.2" fill="#8a0608"/>
<polygon points="863.3,153 867.4,154.2 867.2,157.6 863.3,156.6" fill="#f2d79c"/>
<path d="M866.500 154.200L881.200 158.600" stroke="#f6e8c0" stroke-width="0.900"/>
<polygon points="946,99 957.8,104 957.4,108.4 945.6,103.4" fill="#c20c10"/>
<polygon points="945.7,102.2 957.5,107.2 957.4,108.4 945.6,103.4" fill="#8a0608"/>
<polygon points="941.8,97.8 947.4,99.6 947,103.6 941.8,101.8" fill="#f2d79c"/>
<polygon points="1045.4,93.4 1050,91.4 1058,98 1053,101.4" fill="#c20c10"/>
<polygon points="1045.4,93.4 1047,92.8 1054.6,100.4 1053,101.4" fill="#8a0608"/>
<polygon points="1044.6,88.4 1049.6,89.4 1050,93.4 1045.2,94.2" fill="#f2d79c"/>
<polygon points="1138,141.5 1143.5,141.5 1146.8,146.5 1141,148.2" fill="#c20c10"/>
<polygon points="1137.4,136.6 1141.6,137.2 1141.8,142.4 1137.6,142" fill="#f2d79c"/>
<polygon points="860.3,277.7 1155.8,281.4 1155.8,317.9 859,309.5" fill="#dbc1a4"/>
<polygon points="860.3,277.7 1155.8,281.4 1155.8,290 860,284.6" fill="#fde2c8"/>
<polygon points="859.2,305.4 1155.8,313.6 1155.8,317.9 859,309.5" fill="#ead2b8"/>
<path d="M859.200 305.600L1155.800 313.800" stroke="#aaaaa6" stroke-width="1.200"/>
<path d="M860 293.400L1153 300.400" stroke="#cdb497" stroke-width="0.600"/>
<path d="M1152.800 282V317" stroke="#c8a890" stroke-width="0.700"/>
<polygon points="1155.8,281.4 1197.2,268.3 1197.2,284.4 1155.8,317.9" fill="#e2e2e2"/>
<polygon points="1155.8,281.4 1197.2,268.3 1197.2,273 1155.8,288" fill="#ffffff"/>
<path d="M1155.800 281.400V318M1155.800 314.600L1197 281.600M1155.800 318L1197.200 284.600" stroke="#b0a0a0" stroke-width="0.700" fill="none"/>
<path d="M868 268.900L1198 271.400" stroke="#3f5862" stroke-width="0.900" fill="none"/>
</svg>

<div class="vb" style="top:36px"></div><div class="vb" style="top:70px"></div>
<div class="vb" style="top:122px"></div><div class="vb" style="top:156px"></div><div class="vb" style="top:190px"></div>
<div class="vb" style="top:242px"></div><div class="vb" style="top:276px"></div><div class="vb" style="top:310px"></div><div class="vb" style="top:344px"></div>
<svg style="left:510px;top:30px" width="46" height="350" viewBox="510 30 46 350" fill="none" stroke="#e4e4e4" stroke-width="1.300">
 <!-- 1 fit -->
 <path d="M521.800 48v-7.300h7.400M537 40.700h7.600v7.300M544.600 55.800v7.200h-7.600M529.200 63h-7.400v-7.200"/>
 <path d="M533.100 45l6 3.500v7l-6 3.500l-6 -3.500v-7z" fill="#e4e4e4" stroke="none"/>
 <!-- 2 gps -->
 <circle cx="533.100" cy="86" r="8" stroke-width="1.700"/>
 <circle cx="533.100" cy="86" r="4.100" fill="#e4e4e4" stroke="none"/>
 <path d="M533.100 74.600v3.400M533.100 94v3.400M521.700 86h3.400M541.100 86h3.400" stroke-width="2"/>
 <!-- 3 tape -->
 <rect x="519.300" y="130.200" width="15.400" height="15.400" rx="4.200" stroke-width="1"/>
 <rect x="520.600" y="131.500" width="12.800" height="12.800" rx="3.200" stroke-width="0.800"/>
 <circle cx="526.800" cy="138" r="4" fill="#e4e4e4" stroke="none"/>
 <path d="M534.800 140.500h12.400M534.800 145.400h12.400M547.200 138.400v7.600" stroke-width="1.200"/>
 <path d="M537.400 142.600v2.800M540.200 142.600v2.800M543 142.600v2.800M545.600 142.600v2.800" stroke-width="1"/>
 <path d="M548 149.800v3.800h-3.800z" fill="#f4f4f4" stroke="none"/>
 <!-- 4 section -->
 <path d="M526.600 168.500h19l-7.400 6h-19z" stroke-width="0.900"/>
 <path d="M528 167.600l9.900 -8.900v17.800l-9.900 8.900z" fill="#e4e4e4" stroke="none"/>
 <!-- 5 cube section -->
 <g stroke-width="1"><rect x="521.600" y="200.800" width="17" height="15.700"/><rect x="527.800" y="195.300" width="17" height="15.700"/><path d="M521.600 200.800l6.200 -5.500M538.600 200.800l6.200 -5.500M521.600 216.500l6.200 -5.500M538.600 216.500l6.200 -5.500"/></g>
 <path d="M530.400 200.400l4.800 -4.800v16l-4.800 4.800z" fill="#e4e4e4" stroke="none"/>
 <!-- 6 dashed cube -->
 <rect x="521.600" y="246.200" width="22.800" height="23" stroke-width="0.900" stroke-dasharray="2.200 1.600"/>
 <g stroke-width="0.900"><path d="M533 251.200l5.600 3v6.600l-5.600 3.200l-5.600 -3.200v-6.600zM527.400 254.200l5.600 3.200l5.600 -3.200M533 257.400v6.600"/></g>
 <!-- 7 dashed eye -->
 <rect x="520.600" y="279.200" width="25" height="25.200" stroke-width="0.900" stroke-dasharray="3.400 2.200"/>
 <g transform="translate(523.900,283.100) scale(0.770)" fill="#e4e4e4" stroke="none"><path d="M12,9A3,3 0 0,0 9,12A3,3 0 0,0 12,15A3,3 0 0,0 15,12A3,3 0 0,0 12,9M12,17A5,5 0 0,1 7,12A5,5 0 0,1 12,7A5,5 0 0,1 17,12A5,5 0 0,1 12,17M12,4.500C7,4.500 2.730,7.610 1,12C2.730,16.390 7,19.500 12,19.500C17,19.500 21.270,16.390 23,12C21.270,7.610 17,4.500 12,4.500Z"/></g>
 <!-- 8 dashed eye off -->
 <rect x="520.600" y="313.200" width="25" height="25.200" stroke-width="0.900" stroke-dasharray="3.400 2.200"/>
 <g transform="translate(523.900,316.500) scale(0.770)" fill="#e4e4e4" stroke="none"><path d="M11.830,9L15,12.160C15,12.110 15,12.050 15,12A3,3 0 0,0 12,9C11.940,9 11.890,9 11.830,9M7.530,9.800L9.080,11.350C9.030,11.560 9,11.770 9,12A3,3 0 0,0 12,15C12.220,15 12.440,14.970 12.650,14.920L14.200,16.470C13.530,16.800 12.790,17 12,17A5,5 0 0,1 7,12C7,11.210 7.200,10.470 7.530,9.800M2,4.270L4.280,6.550L4.730,7C3.080,8.300 1.780,10 1,12C2.730,16.390 7,19.500 12,19.500C13.550,19.500 15.030,19.200 16.380,18.660L16.810,19.080L19.730,22L21,20.730L3.270,3M12,7A5,5 0 0,1 17,12C17,12.640 16.870,13.260 16.640,13.820L19.570,16.750C21.070,15.500 22.270,13.860 23,12C21.270,7.610 17,4.500 12,4.500C10.600,4.500 9.260,4.750 8,5.200L10.170,7.350C10.740,7.130 11.350,7 12,7Z"/></g>
 <!-- 9 dashed close -->
 <path d="M531 372.200h-10.400v-25h25v11" stroke-width="0.900" stroke-dasharray="3.400 2.200"/>
 <rect x="531" y="358.200" width="15" height="14.600" fill="#e8e8e8" stroke="none"/>
 <path d="M535 362l7 7M542 362l-7 7" stroke="#333" stroke-width="1.200"/>
</svg>

<div id="bp">
<div class="abs" style="left:0;top:41px;width:1172px;height:243px;background:#fff"></div>
<div class="abs" style="left:64px;top:41px;width:1108px;height:31px;background:#666"></div>
<div class="abs" style="left:0;top:72px;width:1172px;height:32px;background:#fff;border-top:1px solid #d4d4d4"></div>
<div class="abs" style="left:0;top:104px;width:1172px;height:32px;background:#fff;border-top:1px solid #d4d4d4"></div>
<div class="abs" style="left:0;top:136px;width:1172px;height:32px;background:#f0f0f0;border-top:1px solid #d4d4d4"></div>
<div class="abs" style="left:0;top:168px;width:1172px;height:32px;background:#fff;border-top:1px solid #d4d4d4"></div>
<div class="abs" style="left:0;top:200px;width:1172px;height:32px;background:#f0f0f0;border-top:1px solid #d4d4d4"></div>
<div class="abs" style="left:0;top:232px;width:1172px;height:32px;background:#fff;border-top:1px solid #d4d4d4"></div>
<div class="abs" style="left:0;top:72px;width:1172px;height:1px;background:#fff"></div>
<div class="abs" style="left:154px;top:41px;width:1px;height:30px;background:#515151"></div>
<div class="abs" style="left:286px;top:41px;width:1px;height:30px;background:#515151"></div>
<div class="abs" style="left:486px;top:41px;width:1px;height:30px;background:#515151"></div>
<div class="abs" style="left:686px;top:41px;width:1px;height:30px;background:#515151"></div>
<div class="abs" style="left:786px;top:41px;width:1px;height:30px;background:#515151"></div>
<div class="abs" style="left:903px;top:41px;width:1px;height:30px;background:#515151"></div>
<div class="abs" style="left:1053px;top:41px;width:1px;height:30px;background:#515151"></div>
<div class="abs" style="left:64px;top:137px;width:1px;height:128px;background:#484848"></div>
<div class="abs" style="left:154px;top:137px;width:1px;height:128px;background:#484848"></div>
<div class="abs" style="left:286px;top:137px;width:1px;height:128px;background:#484848"></div>
<div class="abs" style="left:486px;top:137px;width:1px;height:128px;background:#484848"></div>
<div class="abs" style="left:686px;top:137px;width:1px;height:128px;background:#484848"></div>
<div class="abs" style="left:786px;top:137px;width:1px;height:128px;background:#484848"></div>
<div class="abs" style="left:903px;top:137px;width:1px;height:128px;background:#484848"></div>
<div class="abs" style="left:1053px;top:137px;width:1px;height:128px;background:#484848"></div>
</div>
<svg style="left:564px;top:458px" width="24" height="24" viewBox="564 458 24 24" fill="#ececec"><rect x="566.900" y="462" width="13.200" height="2"/><rect x="566.900" y="466" width="13.200" height="2"/><rect x="566.900" y="470" width="9.200" height="2"/><path d="M577.800 470.200v5.800l5 -2.900z"/></svg>
<span class="t" id="bp_title" style="left:590.49px;top:462.00px;font-size:13.60px;color:#ececec;line-height:1;letter-spacing:0.45px">Коллизии (количество: 56)</span>
<div class="abs" style="left:1145px;top:451px;width:42px;height:3px;background:#3d94b0"></div>
<div class="abs pill" style="left:1066px;top:458px;width:80px;height:20px;background:#3a94b2"></div>
<div class="abs pill" style="left:1150px;top:458px;width:74px;height:20px;background:#fdfdfd"></div>
<span class="t" id="pb1" style="left:1074.86px;top:465.00px;font-size:10.00px;font-weight:700;color:#fff;letter-spacing:0.94px;line-height:1">КОЛЛИЗИИ</span>
<span class="t" id="pb2" style="left:1159.73px;top:465.00px;font-size:10.00px;color:#1c1c1c;letter-spacing:1.01px;line-height:1">В ЗАДАЧЕ</span>
<svg style="left:1540px;top:450px" width="190" height="36" viewBox="1540 450 190 36" fill="none" stroke="#e8e8e8" stroke-width="1.900" stroke-linejoin="round">
<rect x="1552.100" y="459.200" width="10.800" height="10.400" rx="2.200"/><rect x="1557.100" y="464.100" width="10.700" height="10.400" rx="2.200"/>
<path d="M1590.100 460.900h13.900M1590.100 476h13.900" stroke-width="2"/><path d="M1597 465.500v7" stroke-width="1.900"/><path d="M1597 462.800l3.300 4h-6.600zM1597 474.400l3.300 -4h-6.600z" fill="#e8e8e8" stroke="none"/>
<rect x="1625.900" y="465.900" width="14" height="4.300" fill="#b4b4b4" stroke="none"/><path d="M1625.900 466.600h14M1625.900 469.500h14" stroke-width="1.400"/><path d="M1632.900 459.100v4M1632.900 476.800v-4" stroke-width="1.900"/><path d="M1632.900 465.200l3.500 -3.600h-7zM1632.900 471l3.500 3.600h-7z" fill="#e8e8e8" stroke="none"/>
<g transform="translate(1658.200,457.200) scale(0.900)" fill="#e8e8e8" stroke="none"><path d="M12,15.500A3.500,3.500 0 0,1 8.500,12A3.500,3.500 0 0,1 12,8.500A3.500,3.500 0 0,1 15.500,12A3.500,3.500 0 0,1 12,15.500M19.430,12.970C19.470,12.650 19.500,12.330 19.500,12C19.500,11.670 19.470,11.340 19.430,11L21.540,9.370C21.730,9.220 21.780,8.950 21.660,8.730L19.660,5.270C19.540,5.050 19.270,4.960 19.050,5.050L16.560,6.050C16.040,5.660 15.500,5.320 14.870,5.070L14.500,2.420C14.460,2.180 14.250,2 14,2H10C9.750,2 9.540,2.180 9.500,2.420L9.130,5.070C8.500,5.320 7.960,5.660 7.440,6.050L4.950,5.050C4.730,4.960 4.460,5.050 4.340,5.270L2.340,8.730C2.210,8.950 2.270,9.220 2.460,9.370L4.570,11C4.530,11.340 4.500,11.670 4.500,12C4.500,12.330 4.530,12.650 4.570,12.970L2.460,14.630C2.270,14.780 2.210,15.050 2.340,15.270L4.340,18.730C4.460,18.950 4.730,19.030 4.950,18.950L7.440,17.940C7.960,18.340 8.500,18.680 9.130,18.930L9.500,21.580C9.540,21.820 9.750,22 10,22H14C14.250,22 14.460,21.820 14.500,21.580L14.870,18.930C15.500,18.670 16.040,18.340 16.560,17.940L19.050,18.950C19.270,19.030 19.540,18.950 19.660,18.730L21.660,15.270C21.780,15.050 21.730,14.780 21.540,14.630L19.430,12.970Z"/></g>
<path d="M1700.200 466.400l4.800 4.800l4.800 -4.800" stroke-width="1.800" stroke-linejoin="miter"/>
</svg>
<span class="t th" id="h1" style="left:639.45px;top:496.00px;font-size:12.00px;line-height:1;letter-spacing:-0.18px">Статус</span>
<span class="t th" id="h2" style="left:729.01px;top:496.00px;font-size:12.00px;line-height:1;letter-spacing:-0.06px">Раздел</span>
<span class="t th" id="h3" style="left:860.82px;top:496.00px;font-size:12.00px;line-height:1;letter-spacing:-0.17px">Элемент (Модель A)</span>
<span class="t th" id="h4" style="left:1060.83px;top:496.00px;font-size:12.00px;line-height:1;letter-spacing:-0.18px">Элемент (Модель B)</span>
<span class="t th" id="h5" style="left:1260.95px;top:496.00px;font-size:12.00px;line-height:1;letter-spacing:-0.10px">Задача</span>
<span class="t th" id="h6" style="left:1360.65px;top:496.00px;font-size:12.00px;line-height:1;letter-spacing:-0.14px">Расстояние</span>
<span class="t th" id="h7" style="left:1478.98px;top:496.00px;font-size:12.00px;line-height:1;letter-spacing:-0.09px">Тип</span>
<div class="abs" style="left:1620px;top:486px;width:111px;height:31px;overflow:hidden"><span class="t th" id="h8" style="left:8.800px;top:10px;font-size:12px;letter-spacing:-0.270px">Допустимое расстояние</span></div>
<div class="cb2" style="top:493px"></div>
<div class="cb2" style="top:525px"></div>
<div class="cb2" style="top:557px"></div>
<div class="cb2" style="top:589px"></div>
<div class="cb2" style="top:621px"></div>
<div class="cb2" style="top:653px"></div>
<div class="cb2" style="top:685px"></div>
<svg style="left:636px;top:528px" width="16" height="44" viewBox="636 528 16 44"><path d="M639.100 532.100h9.800l-4.900 4.900z" fill="#737373"/><path d="M639.100 568.900h9.800l-4.900 -4.900z" fill="#737373"/></svg>
<span class="t td" id="g1" style="left:655.32px;top:526.00px;font-size:13.60px;line-height:1;letter-spacing:0.46px">Неотсортированные</span>
<span class="t td" id="g2" style="left:655.56px;top:558.00px;font-size:13.60px;line-height:1;letter-spacing:0.46px">группа из 4 коллизий</span>
<svg style="left:800px;top:545px" width="140" height="36" viewBox="800 545 140 36"><defs><filter id="sh" x="-10%" y="-50%" width="130%" height="250%"><feGaussianBlur stdDeviation="1.300"/></filter></defs><g filter="url(#sh)" opacity="0.550" transform="translate(3.200,4.200)"><path d="M812 561.500l15 -7.600v6.100h89v3h-89v6.100z" fill="#000"/></g><path d="M812 561.500l15 -7.600v6.100h89v3h-89v6.100z" fill="#c00000"/></svg>
<span class="t td" id="a0" style="left:639.38px;top:591.00px;font-size:13.50px;line-height:1;letter-spacing:0.94px">новая</span>
<span class="t td" id="b0" style="left:728.86px;top:591.00px;font-size:13.50px;line-height:1;letter-spacing:0.37px">КР - КР</span>
<div class="abs clip" style="left:855px;top:581px;width:190.300px"><span class="t" id="c0" style="left:6.200px;top:10px;font-size:13.500px;color:#222;letter-spacing:-0.015px">Свая_Винтовая_СВС_по_ТУ_5264</span></div>
<div class="abs clip" style="left:1055px;top:581px;width:190.200px"><span class="t" id="d0" style="left:5.800px;top:10px;font-size:13.500px;color:#222;letter-spacing:0.270px">Фундаментная плита:ADSK_Плита</span></div>
<span class="t td" id="e0" style="left:1361.18px;top:591.00px;font-size:13.50px;line-height:1;letter-spacing:0.66px">0.0 мм</span>
<span class="t" id="f0" style="left:1478.10px;top:590.00px;font-size:13.00px;color:#5a5a5a;line-height:1;letter-spacing:0.01px">неопредел...</span>
<div class="abs" style="left:1479px;top:609px;width:117px;height:1px;background:#7a7a7a"></div>
<svg style="left:1578px;top:592px" width="12" height="8" viewBox="0 0 12 8"><path d="M1.200 1.300h9.400l-4.700 5.200z" fill="#6a6a6a"/></svg>
<span class="t" id="z0" style="left:1628.58px;top:590.00px;font-size:16.80px;color:#222;line-height:1">0</span>
<div class="abs" style="left:1629px;top:609px;width:102px;height:1px;background:#7a7a7a"></div>
<span class="t td" id="a1" style="left:639.41px;top:623.00px;font-size:13.50px;line-height:1;letter-spacing:0.92px">новая</span>
<span class="t td" id="b1" style="left:728.85px;top:623.00px;font-size:13.50px;line-height:1;letter-spacing:0.35px">КР - КР</span>
<div class="abs clip" style="left:855px;top:613px;width:190.300px"><span class="t" id="c1" style="left:6.200px;top:10px;font-size:13.500px;color:#222;letter-spacing:-0.015px">Свая_Винтовая_СВС_по_ТУ_5264</span></div>
<div class="abs clip" style="left:1055px;top:613px;width:190.200px"><span class="t" id="d1" style="left:5.800px;top:10px;font-size:13.500px;color:#222;letter-spacing:0.270px">Фундаментная плита:ADSK_Плита</span></div>
<span class="t td" id="e1" style="left:1361.19px;top:623.00px;font-size:13.50px;line-height:1;letter-spacing:0.62px">0.0 мм</span>
<span class="t" id="f1" style="left:1478.03px;top:622.00px;font-size:13.00px;color:#5a5a5a;line-height:1;letter-spacing:0.01px">неопредел...</span>
<div class="abs" style="left:1479px;top:641px;width:117px;height:1px;background:#7a7a7a"></div>
<svg style="left:1578px;top:624px" width="12" height="8" viewBox="0 0 12 8"><path d="M1.200 1.300h9.400l-4.700 5.200z" fill="#6a6a6a"/></svg>
<span class="t" id="z1" style="left:1628.58px;top:622.00px;font-size:16.80px;color:#222;line-height:1">0</span>
<div class="abs" style="left:1629px;top:641px;width:102px;height:1px;background:#7a7a7a"></div>
<span class="t td" id="a2" style="left:639.41px;top:655.00px;font-size:13.50px;line-height:1;letter-spacing:0.93px">новая</span>
<span class="t td" id="b2" style="left:728.54px;top:655.00px;font-size:13.50px;line-height:1;letter-spacing:0.39px">КР - КР</span>
<div class="abs clip" style="left:855px;top:645px;width:190.300px"><span class="t" id="c2" style="left:6.200px;top:10px;font-size:13.500px;color:#222;letter-spacing:-0.015px">Свая_Винтовая_СВС_по_ТУ_5264</span></div>
<div class="abs clip" style="left:1055px;top:645px;width:190.200px"><span class="t" id="d2" style="left:5.800px;top:10px;font-size:13.500px;color:#222;letter-spacing:0.270px">Фундаментная плита:ADSK_Плита</span></div>
<span class="t td" id="e2" style="left:1361.19px;top:655.00px;font-size:13.50px;line-height:1;letter-spacing:0.62px">0.0 мм</span>
<span class="t" id="f2" style="left:1478.08px;top:654.00px;font-size:13.00px;color:#5a5a5a;line-height:1;letter-spacing:0.01px">неопредел...</span>
<div class="abs" style="left:1479px;top:673px;width:117px;height:1px;background:#7a7a7a"></div>
<svg style="left:1578px;top:656px" width="12" height="8" viewBox="0 0 12 8"><path d="M1.200 1.300h9.400l-4.700 5.200z" fill="#6a6a6a"/></svg>
<span class="t" id="z2" style="left:1628.58px;top:654.00px;font-size:16.80px;color:#222;line-height:1">0</span>
<div class="abs" style="left:1629px;top:673px;width:102px;height:1px;background:#7a7a7a"></div>
<span class="t td" id="a3" style="left:639.41px;top:687.00px;font-size:13.50px;line-height:1;letter-spacing:0.92px">новая</span>
<span class="t td" id="b3" style="left:728.85px;top:687.00px;font-size:13.50px;line-height:1;letter-spacing:0.35px">КР - КР</span>
<div class="abs clip" style="left:855px;top:677px;width:190.300px"><span class="t" id="c3" style="left:6.200px;top:10px;font-size:13.500px;color:#222;letter-spacing:-0.015px">Свая_Винтовая_СВС_по_ТУ_5264</span></div>
<div class="abs clip" style="left:1055px;top:677px;width:190.200px"><span class="t" id="d3" style="left:5.800px;top:10px;font-size:13.500px;color:#222;letter-spacing:0.270px">Фундаментная плита:ADSK_Плита</span></div>
<span class="t td" id="e3" style="left:1361.19px;top:687.00px;font-size:13.50px;line-height:1;letter-spacing:0.62px">0.0 мм</span>
<span class="t" id="f3" style="left:1478.03px;top:686.00px;font-size:13.00px;color:#5a5a5a;line-height:1;letter-spacing:0.01px">неопредел...</span>
<div class="abs" style="left:1479px;top:705px;width:117px;height:1px;background:#7a7a7a"></div>
<svg style="left:1578px;top:688px" width="12" height="8" viewBox="0 0 12 8"><path d="M1.200 1.300h9.400l-4.700 5.200z" fill="#6a6a6a"/></svg>
<span class="t" id="z3" style="left:1628.58px;top:686.00px;font-size:16.80px;color:#222;line-height:1">0</span>
<div class="abs" style="left:1629px;top:705px;width:102px;height:1px;background:#7a7a7a"></div>

<div id="frame"></div>
</div>
</body>
</html>
